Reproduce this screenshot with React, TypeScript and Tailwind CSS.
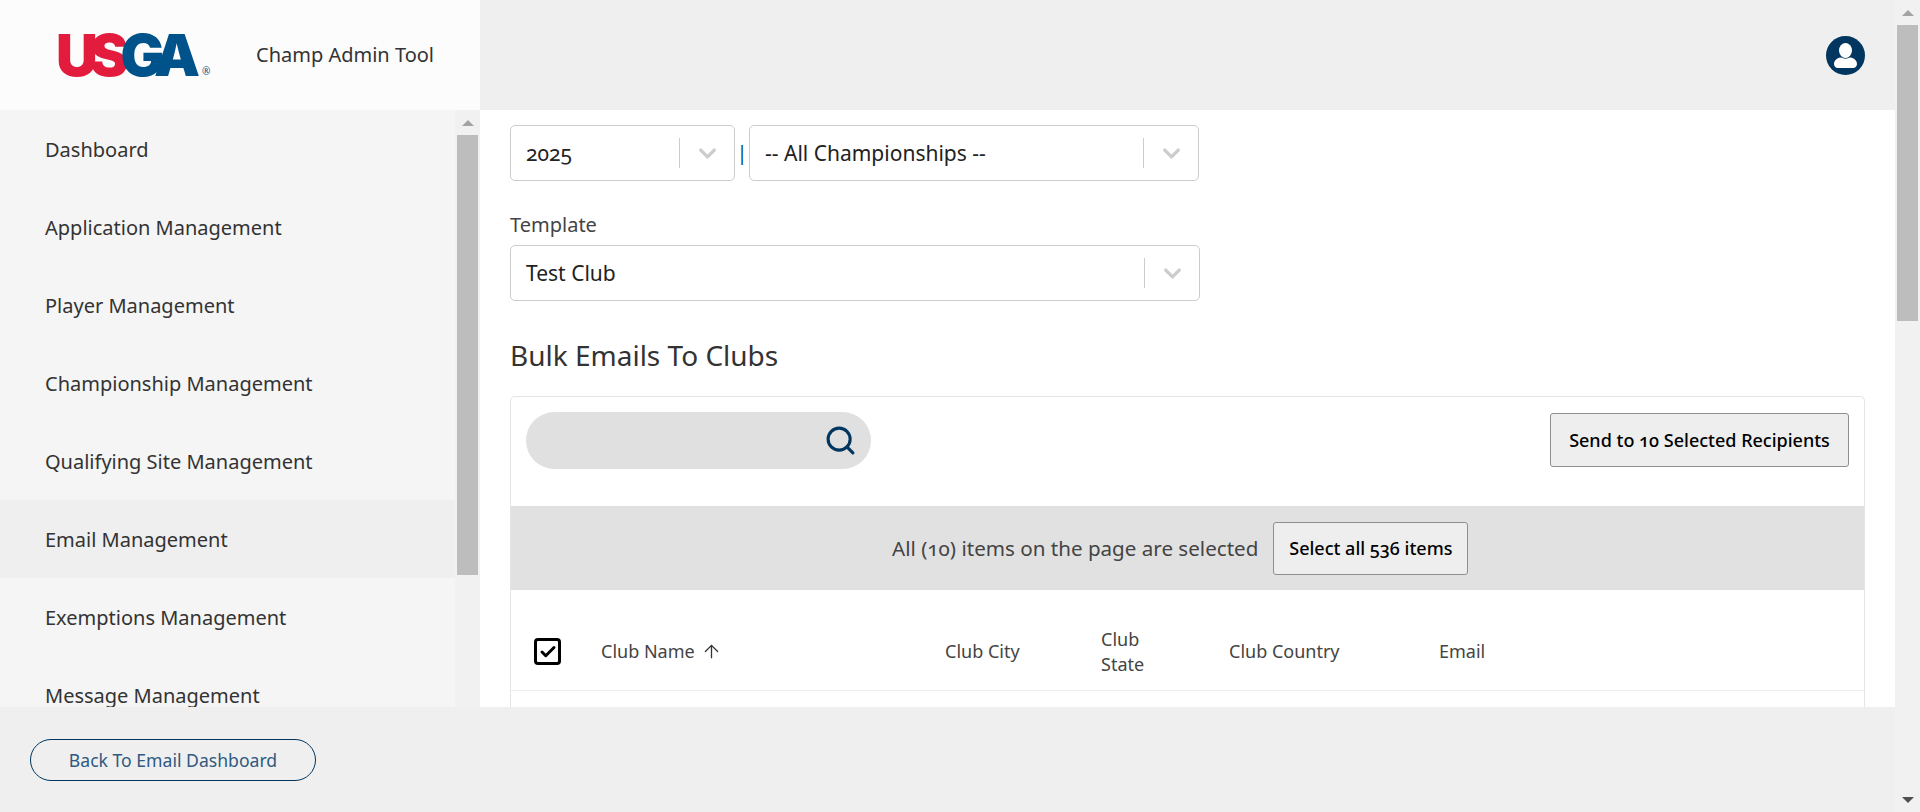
import { ChevronDown, ArrowUp, Search, Check } from "lucide-react";

const font = "font-['Noto_Sans',sans-serif]";

const menu = [
  "Dashboard",
  "Application Management",
  "Player Management",
  "Championship Management",
  "Qualifying Site Management",
  "Email Management",
  "Exemptions Management",
  "Message Management",
];

function Logo() {
  return (
    <div className="relative flex w-[150px] items-end">
      <span className="font-['Inter',sans-serif] text-[58px] leading-[42px] font-black tracking-[-8px] text-[#e31b3c]">US</span>
      <span className="font-['Inter',sans-serif] text-[58px] leading-[42px] font-black tracking-[-8px] text-[#00538a]">GA</span>
      <span className="ml-[10px] text-[10px] leading-[9px] text-[#00538a]">®</span>
    </div>
  );
}

function Scrollbar({ thumb, down }: { thumb: string; down?: boolean }) {
  return (
    <div className="flex h-full w-[25px] shrink-0 flex-col items-center bg-[#f1f1f1]">
      <div className="flex h-[25px] w-full items-center justify-center">
        <div className="h-0 w-0 border-x-[6px] border-b-[6px] border-x-transparent border-b-[#a3a3a3]" />
      </div>
      <div className={thumb} />
      {down && (
        <div className="mt-auto flex h-[25px] w-full items-center justify-center">
          <div className="h-0 w-0 border-x-[6px] border-t-[6px] border-x-transparent border-t-[#505050]" />
        </div>
      )}
    </div>
  );
}

function Select({ value, className }: { value: string; className: string }) {
  return (
    <div className={`flex h-14 items-center rounded-[5px] border border-[#cccccc] bg-white pl-[15px] ${className}`}>
      <span className="flex-1 pt-[2px] text-[21px] text-[#222222] [font-feature-settings:'onum']">{value}</span>
      <div className="h-[30px] w-px bg-[#cccccc]" />
      <div className="flex w-[54px] items-center justify-center">
        <ChevronDown className="h-[27px] w-[27px] text-[#cccccc]" strokeWidth={3} />
      </div>
    </div>
  );
}

export default function App() {
  return (
    <div className={`flex h-[812px] w-full overflow-hidden bg-[#efefef] ${font}`}>
      <div className="flex min-w-0 flex-1 flex-col">
        <header className="flex h-[110px] shrink-0">
          <div className="flex w-[480px] items-center bg-[#fcfcfc] pl-[56px]">
            <Logo />
            <span className="ml-[50px] text-[20px] text-[#333333]">Champ Admin Tool</span>
          </div>
          <div className="flex flex-1 items-center justify-end pr-[30px]">
            <div className="flex h-[39px] w-[39px] items-center justify-center rounded-full bg-[#00365f]">
              <svg viewBox="0 0 39 39" className="h-[39px] w-[39px]">
                <ellipse cx="19.500" cy="14.500" rx="6.500" ry="7.500" fill="#ffffff" />
                <path d="M8 28c0-4 4-6.500 7-6.500 2.500 1.500 6.500 1.500 9 0 3 0 7 2.500 7 6.500 0 2-1.500 4-4 4H12c-2.500 0-4-2-4-4z" fill="#ffffff" />
              </svg>
            </div>
          </div>
        </header>

        <div className="flex min-h-0 flex-1">
          <aside className="flex w-[480px] shrink-0">
            <nav className="w-[455px] overflow-hidden bg-[#f5f5f5]">
              {menu.map((item) => (
                <div
                  key={item}
                  className={`flex h-[78px] items-center pt-px pl-[45px] text-[20px] text-[#333333] ${item === "Email Management" ? "bg-[#efefef]" : ""}`}
                >
                  {item}
                </div>
              ))}
            </nav>
            <Scrollbar thumb="h-[440px] w-[21px] bg-[#bdbdbd]" />
          </aside>

          <main className="min-w-0 flex-1 overflow-hidden bg-white pt-[15px] pl-[30px] pr-[30px]">
            <div className="flex items-center">
              <Select value="2025" className="w-[225px]" />
              <span className="w-[14px] text-center text-[20px] text-[#00538a]">|</span>
              <Select value="-- All Championships --" className="w-[450px]" />
            </div>

            <div className="mt-[28px] mb-[4px] text-[20px] leading-[32px] text-[#444444]">Template</div>
            <Select value="Test Club" className="w-[690px]" />

            <h2 className="mt-[37px] text-[28px] leading-[34px] text-[#333333]">Bulk Emails To Clubs</h2>

            <section className="mt-[24px] rounded-t-[5px] border border-b-0 border-[#e5e5e5]">
              <div className="flex h-[109px] items-start justify-between pt-[15px] pr-[15px] pl-[15px]">
                <div className="flex h-[57px] w-[345px] items-center justify-end rounded-full bg-[#e0e0e0] pr-[14px]">
                  <Search className="h-[33px] w-[33px] text-[#00365f]" strokeWidth={2.25} />
                </div>
                <button className="mt-px h-[54px] w-[299px] rounded-[3px] border border-[#8f8f8f] bg-[#eeeeee] text-[18px] font-medium text-black [font-feature-settings:'onum']">
                  Send to 10 Selected Recipients
                </button>
              </div>

              <div className="flex h-[84px] items-center bg-[#e1e1e1] pl-[381px]">
                <span className="text-[20.6px] text-[#444444] [font-feature-settings:'onum']">All (10) items on the page are selected</span>
                <button className="ml-[15px] h-[53px] w-[195px] rounded-[3px] border border-[#8f8f8f] bg-[#eeeeee] text-[18px] font-medium text-black [font-feature-settings:'onum']">
                  Select all 536 items
                </button>
              </div>

              <div className="flex h-[101px] items-center border-b border-[#eeeeee] pt-[23px] text-[18px] text-[#444444]">
                <div className="ml-[23px] flex h-[27px] w-[27px] items-center justify-center rounded-[4px] border-[3px] border-black">
                  <Check className="h-[18px] w-[18px] text-black" strokeWidth={4} />
                </div>
                <div className="ml-[40px] flex w-[344px] items-center gap-[6px]">
                  Club Name
                  <ArrowUp className="h-[21px] w-[21px] text-[#333333]" strokeWidth={1.5} />
                </div>
                <div className="w-[156px]">Club City</div>
                <div className="w-[128px] leading-[25px]">Club<br />State</div>
                <div className="w-[210px]">Club Country</div>
                <div>Email</div>
              </div>
              <div className="h-[60px]" />
            </section>
          </main>
        </div>

        <footer className="flex h-[105px] shrink-0 items-start pt-[32px] pl-[30px]">
          <button className="h-[42px] w-[286px] rounded-full border border-[#00365f] text-[17.6px] text-[#2f5a82]">
            Back To Email Dashboard
          </button>
        </footer>
      </div>
      <Scrollbar thumb="h-[296px] w-[21px] bg-[#bdbdbd]" down />
    </div>
  );
}
